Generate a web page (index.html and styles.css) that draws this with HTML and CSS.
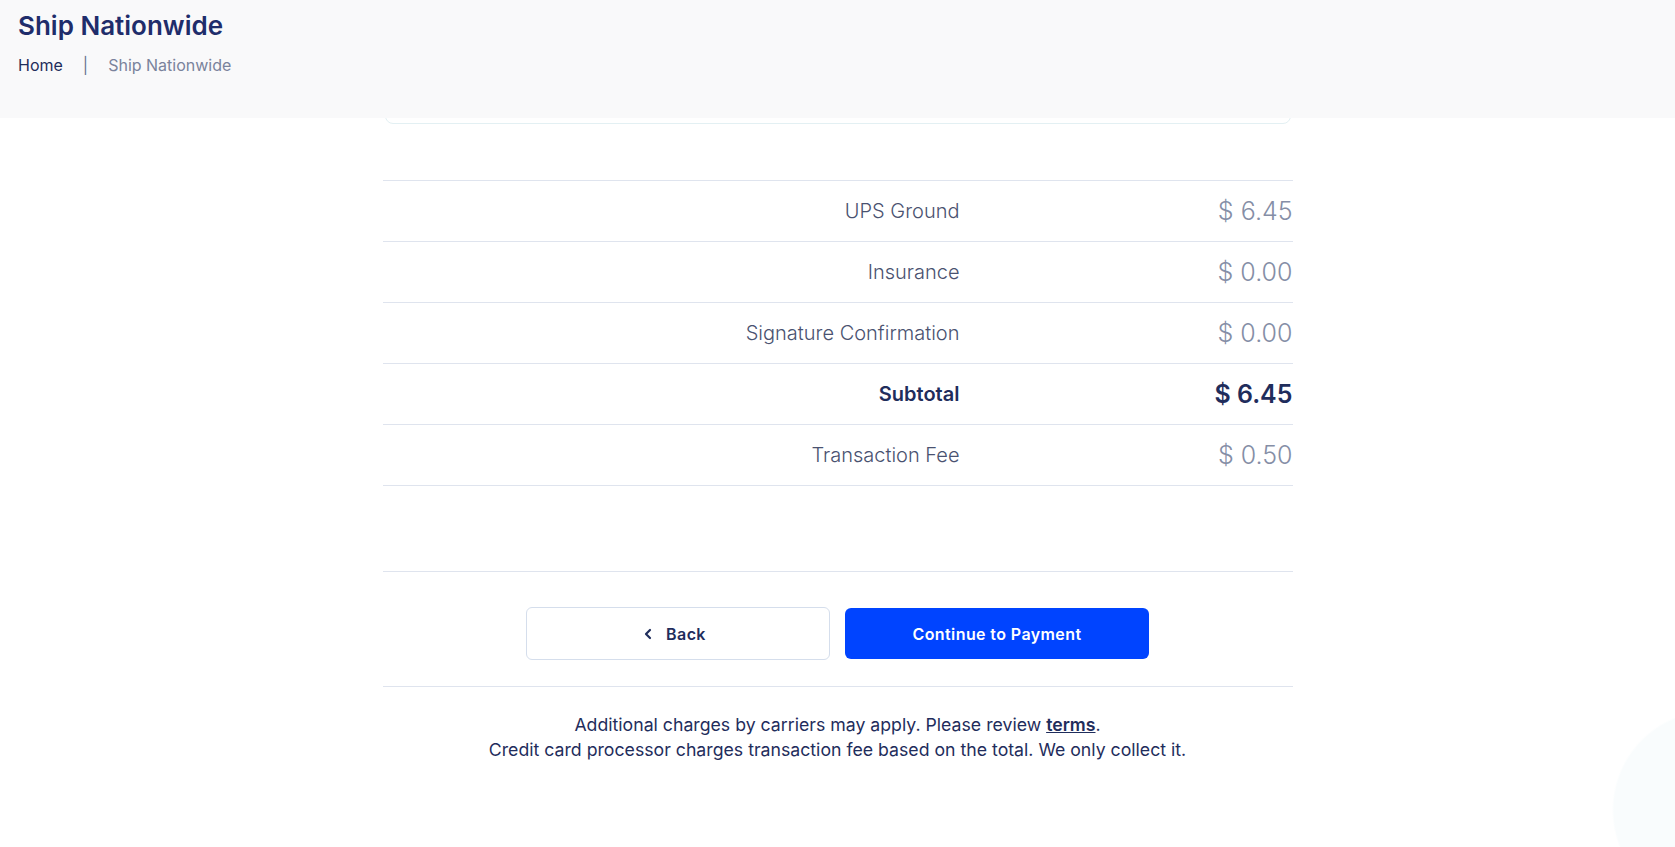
FILE: index.html
```html
<!DOCTYPE html>
<html lang="en">

<head>
  <meta charset="UTF-8">
  <meta name="viewport" content="width=device-width, initial-scale=1.0">
  <title>Ship Nationwide</title>

  <link rel="stylesheet" href="styles.css">
</head>

<body>
  <header class="page-header">
    <h1>Ship Nationwide</h1>
    <nav class="crumbs">
      <a href="#">Home</a>
      <span class="sep">|</span>
      <span class="current">Ship Nationwide</span>
    </nav>
  </header>

  <main class="container">
    <div class="card"></div>

    <div class="summary">
      <div class="row">
        <div class="label">UPS Ground</div>
        <div class="value">$ 6.45</div>
      </div>
      <div class="row">
        <div class="label">Insurance</div>
        <div class="value">$ 0.00</div>
      </div>
      <div class="row">
        <div class="label">Signature Confirmation</div>
        <div class="value">$ 0.00</div>
      </div>
      <div class="row total">
        <div class="label">Subtotal</div>
        <div class="value">$ 6.45</div>
      </div>
      <div class="row">
        <div class="label">Transaction Fee</div>
        <div class="value">$ 0.50</div>
      </div>
    </div>

    <div class="actions">
      <button class="btn btn-back">
        <svg width="12" height="12" viewBox="0 0 12 12"><path d="M8 2 L4 6 L8 10" fill="none" stroke="#1f2d5c" stroke-width="2.2" stroke-linecap="round" stroke-linejoin="round"/></svg>
        Back
      </button>
      <button class="btn btn-primary">Continue to Payment</button>
    </div>

    <p class="note">
      Additional charges by carriers may apply. Please review <a href="#">terms</a>.<br>
      Credit card processor charges transaction fee based on the total. We only collect it.
    </p>
  </main>

  <div class="bubble"></div>
</body>

</html>
```

FILE: styles.css
```css
* {
  padding: 0;
  margin: 0;
  box-sizing: border-box;
}

body {
  background-color: white;
  font-family: Inter, 'Noto Sans', sans-serif;
  color: #1f2d5c;
  overflow: hidden;
  height: 847px;
}

.page-header {
  position: absolute;
  top: 0;
  left: 0;
  right: 0;
  height: 118px;
  background-color: #f9f9fa;
  padding: 10px 18px 0;
  z-index: 2;
}

.page-header h1 {
  font-size: 26px;
  font-weight: 600;
  line-height: 32px;
  color: #1f2d6b;
}

.crumbs {
  display: flex;
  align-items: center;
  margin-top: 13px;
  font-size: 16px;
  line-height: 20px;
}

.crumbs a {
  color: #1f2d5c;
  text-decoration: none;
}

.crumbs .sep {
  color: #6b7592;
  margin: 0 20px;
}

.crumbs .current {
  color: #7a839c;
}

.container {
  width: 910px;
  margin: 0 auto;
  padding-top: 74px;
}

.card {
  height: 50px;
  margin: 0 2px;
  border: 1px solid #e3f0f3;
  border-radius: 8px;
}

.summary {
  margin-top: 56px;
  border-top: 1px solid #dfe4ee;
}

.row {
  display: grid;
  grid-template-columns: 1fr 333px;
  align-items: center;
  height: 61px;
  border-bottom: 1px solid #dfe4ee;
}

.row .label {
  text-align: right;
  font-size: 20px;
  font-weight: 300;
  color: #4a5270;
}

.row .value {
  text-align: right;
  font-size: 25px;
  font-weight: 300;
  color: #858ea6;
}

.row.total .label {
  font-weight: 600;
  color: #1f2d5c;
}

.row.total .value {
  font-weight: 600;
  color: #1f2d5c;
}

.actions {
  display: flex;
  justify-content: center;
  gap: 15px;
  margin-top: 85px;
  padding: 35px 0 26px;
  border-top: 1px solid #dfe4ee;
  border-bottom: 1px solid #dfe4ee;
}

.btn {
  display: flex;
  align-items: center;
  justify-content: center;
  gap: 12px;
  width: 304px;
  height: 53px;
  border-radius: 6px;
  font-family: Inter, sans-serif;
  font-size: 16px;
  font-weight: 600;
  letter-spacing: 0.4px;
  cursor: pointer;
}

.btn-back {
  background-color: white;
  border: 1px solid #d5deec;
  color: #1f2d5c;
  padding-right: 8px;
}

.btn-primary {
  background-color: #0044ff;
  border: none;
  color: white;
  height: 51px;
  margin-top: 1px;
}

.note {
  margin-top: 25px;
  text-align: center;
  font-size: 17.7px;
  line-height: 25px;
  color: #1f2d5c;
}

.note a {
  color: #1f2d5c;
  font-weight: 600;
}

.bubble {
  position: absolute;
  right: 0;
  bottom: 0;
  width: 63px;
  height: 141px;
  background: radial-gradient(circle at 100px 104px, #f9fcfd 0, #f9fcfd 98px, rgba(255, 255, 255, 0) 100px);
}
```
